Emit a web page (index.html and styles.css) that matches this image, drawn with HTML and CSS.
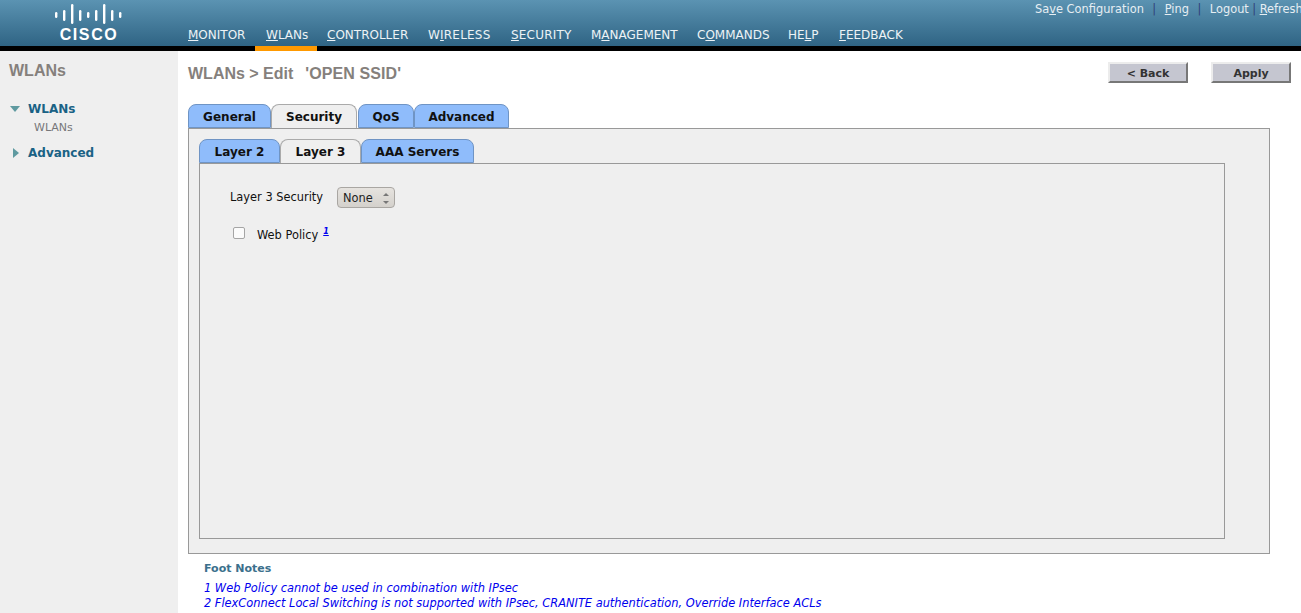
FILE: index.html
```html
<!DOCTYPE html>
<html lang="en">
<head>
<meta charset="utf-8">
<title>WLANs &gt; Edit</title>
<link rel="stylesheet" href="styles.css">
</head>
<body>
<header class="header">
  <div class="logo">
    <svg class="logo-bars" width="68" height="20" viewBox="0 0 68 20">
      <g fill="#fff">
        <rect x="0" y="8" width="2.4" height="6" rx="1.2"/>
        <rect x="8" y="6" width="2.4" height="11" rx="1.2"/>
        <rect x="16" y="0" width="2.4" height="20" rx="1.2"/>
        <rect x="24" y="6" width="2.4" height="11" rx="1.2"/>
        <rect x="32" y="8" width="2.4" height="6" rx="1.2"/>
        <rect x="40" y="6" width="2.4" height="11" rx="1.2"/>
        <rect x="48" y="0" width="2.4" height="20" rx="1.2"/>
        <rect x="56" y="6" width="2.4" height="11" rx="1.2"/>
        <rect x="64" y="8" width="2.4" height="6" rx="1.2"/>
      </g>
    </svg>
    <div class="logo-text">CISCO</div>
  </div>
  <div class="header-right">
    <div class="util">
      <a>Sa<u>v</u>e Configuration</a><span class="sep sep-wide">|</span><a><u>P</u>ing</a><span class="sep sep-wide">|</span><a>Lo<u>g</u>out</a><span class="sep">|</span><a><u>R</u>efresh</a>
    </div>
    <nav class="nav">
      <a class="nav-item"><u>M</u>ONITOR</a>
      <a class="nav-item active"><u>W</u>LANs</a>
      <a class="nav-item"><u>C</u>ONTROLLER</a>
      <a class="nav-item wide">W<u>I</u>RELESS</a>
      <a class="nav-item wide"><u>S</u>ECURITY</a>
      <a class="nav-item">M<u>A</u>NAGEMENT</a>
      <a class="nav-item">C<u>O</u>MMANDS</a>
      <a class="nav-item">HE<u>L</u>P</a>
      <a class="nav-item"><u>F</u>EEDBACK</a>
    </nav>
  </div>
</header>
<div class="blackbar"><span class="orange"></span></div>
<div class="body">
  <aside class="side">
    <h2 class="side-title">WLANs</h2>
    <div class="side-group open"><span class="tri-down"></span><a>WLANs</a></div>
    <div class="side-sub">WLANs</div>
    <div class="side-group adv"><span class="tri-right"></span><a>Advanced</a></div>
  </aside>
  <main class="main">
    <div class="titlebar">
      <h1 class="title">WLANs &gt; Edit &nbsp;<span class="ssid">'OPEN SSID'</span></h1>
      <div class="actions">
        <button class="btn" type="button">&lt; Back</button>
        <button class="btn" type="button">Apply</button>
      </div>
    </div>
    <div class="tabs outer-tabs">
      <a class="tab t-general">General</a>
      <a class="tab t-security on">Security</a>
      <a class="tab t-qos">QoS</a>
      <a class="tab t-advanced">Advanced</a>
    </div>
    <section class="panel outer">
      <div class="tabs inner-tabs">
        <a class="tab t-l2">Layer 2</a>
        <a class="tab t-l3 on">Layer 3</a>
        <a class="tab t-aaa">AAA Servers</a>
      </div>
      <div class="panel inner">
        <div class="row-sec">
          <label class="lbl">Layer 3 Security</label>
          <span class="select">None<svg class="spin" width="8" height="13" viewBox="0 0 8 13"><path d="M4 1 7 4H1Z" fill="#777"/><path d="M4 12 1 9H7Z" fill="#777"/></svg></span>
        </div>
        <div class="row-web">
          <span class="check"></span>
          <span class="lbl">Web Policy</span><a class="sup">1</a>
        </div>
      </div>
    </section>
    <div class="notes">
      <div class="notes-title">Foot Notes</div>
      <p class="note">1 Web Policy cannot be used in combination with IPsec</p>
      <p class="note">2 FlexConnect Local Switching is not supported with IPsec, CRANITE authentication, Override Interface ACLs</p>
    </div>
  </main>
</div>
</body>
</html>
```
FILE: styles.css
```css
* { box-sizing: border-box; }
html, body { margin: 0; height: 613px; overflow: hidden; background: #fff; }
body { font-family: "DejaVu Sans", sans-serif; font-size: 11px; color: #111; }

.header {
  display: flex;
  height: 46px;
  background: linear-gradient(#5b93b2, #2f6484);
  color: #fff;
}
.logo { width: 188px; flex: none; padding: 4px 0 0 55px; }
.logo-bars { display: block; }
.logo-text {
  width: 68px;
  margin: 3px 0 0 0;
  font-family: "Liberation Sans", sans-serif;
  font-weight: 700;
  font-size: 16px;
  line-height: 16px;
  letter-spacing: 1.6px;
  text-align: center;
}
.header-right { flex: 1; min-width: 0; display: flex; flex-direction: column; }
.util {
  display: flex;
  margin-left: 847px;
  width: 300px;
  height: 28px;
  padding-top: 2px;
  font-size: 11.4px;
  line-height: 14px;
  white-space: nowrap;
  color: #e6eef3;
}
.sep { color: #2f3f78; margin: 0 3.5px; }
.sep-wide { margin: 0 8.5px; }
.nav {
  display: grid;
  grid-template-columns: 78px 61px 101px 83px 80px 106px 91px 51px 64px;
  font-size: 12px;
  line-height: 14px;
  color: #edf3f6;
}
.nav-item { white-space: nowrap; }
.nav-item.wide { letter-spacing: .2px; }
.blackbar { height: 5px; background: #000; padding-left: 255px; }
.orange { display: block; width: 62px; height: 5px; background: #ff9900; }

.body { display: flex; height: 562px; }
.side { width: 178px; flex: none; background: #efefef; padding: 11px 0 0 9px; }
.side-title {
  margin: 0 0 21px;
  font-family: "Liberation Sans", sans-serif;
  font-size: 16px;
  line-height: 18px;
  color: #85807c;
}
.side-group {
  display: flex;
  align-items: center;
  font-size: 12px;
  font-weight: 700;
  line-height: 16px;
  color: #1a6285;
}
.side-group a { margin-left: 8px; }
.tri-down { width: 0; height: 0; margin-left: 1px; border: 5.5px solid transparent; border-top: 6px solid #5f9aa0; border-bottom: 0; }
.tri-right { width: 0; height: 0; margin-left: 4px; margin-right: 1px; border: 5.5px solid transparent; border-left: 6px solid #5f9aa0; border-right: 0; }
.side-sub { margin: 4px 0 0 25px; font-size: 11px; line-height: 14px; color: #77777a; }
.adv { margin-top: 10px; }

.main { flex: 1; min-width: 0; padding-left: 10px; }
.titlebar { display: flex; justify-content: space-between; height: 53px; padding: 11px 10px 0 0; }
.title {
  margin: 1px 0 0;
  font-family: "Liberation Sans", sans-serif;
  font-size: 16px;
  line-height: 22px;
  color: #85807c;
  white-space: pre;
}
.ssid { margin-left: 3px; letter-spacing: .1px; }
.actions { display: flex; gap: 23px; }
.btn {
  width: 80px;
  height: 21px;
  padding: 1px 0 0;
  font-family: "DejaVu Sans", sans-serif;
  font-size: 11px;
  font-weight: 700;
  color: #333;
  background: #c5c6d0;
  border: 2px solid;
  border-color: #ececec #777 #777 #ececec;
}

.tabs { display: flex; height: 24px; }
.tab {
  display: block;
  height: 24px;
  padding-top: 5px;
  text-align: center;
  font-size: 12px;
  font-weight: 700;
  line-height: 15px;
  color: #111;
  background: #8fbcfb;
  border: 1px solid #6f94c4;
  border-radius: 8px 8px 0 0;
}
.tab.on { background: #efefef; border-color: #aaa; border-bottom: 0; }
.t-general { width: 83px; }
.t-security { width: 86px; }
.t-qos { width: 56px; margin-left: 1px; }
.t-advanced { width: 95px; }
.t-l2 { width: 81px; }
.t-l3 { width: 81px; }
.t-aaa { width: 113px; }

.panel { background: #efefef; border: 1px solid #999; }
.outer { width: 1082px; height: 426px; padding: 10px 0 0 10px; }
.inner { width: 1026px; height: 376px; padding: 23px 0 0 30px; }
.row-sec { display: flex; align-items: center; height: 22px; }
.row-sec .lbl { margin-bottom: 2px; }
.lbl { font-size: 11.4px; line-height: 14px; color: #111; }
.select {
  display: flex;
  align-items: center;
  justify-content: space-between;
  width: 58px;
  height: 21px;
  margin: 0 0 1px 14px;
  padding: 1px 4px 0 5px;
  font-size: 11.4px;
  color: #222;
  background: linear-gradient(#e6e3df, #d4d1cc);
  border: 1px solid #a9a6a2;
  border-radius: 4px;
}
.spin { display: block; }
.row-web { display: flex; align-items: flex-start; margin-top: 16px; padding-left: 3px; height: 20px; }
.check {
  width: 12px;
  height: 12px;
  margin: 2px 12px 0 0;
  background: #fbfbfb;
  border: 1px solid #a5a5a5;
  border-radius: 2px;
}
.row-web .lbl { margin-top: 3px; }
.sup {
  margin: 2px 0 0 5px;
  font-size: 8px;
  line-height: 10px;
  font-weight: 700;
  font-style: italic;
  color: #0000ee;
  text-decoration: underline;
}

.notes { padding: 8px 0 0 16px; }
.notes-title { font-size: 11px; font-weight: 700; line-height: 14px; color: #3c708c; margin-bottom: 5px; }
.note { margin: 0; font-size: 11.4px; line-height: 15px; font-style: italic; color: #0000ee; white-space: nowrap; }
```
